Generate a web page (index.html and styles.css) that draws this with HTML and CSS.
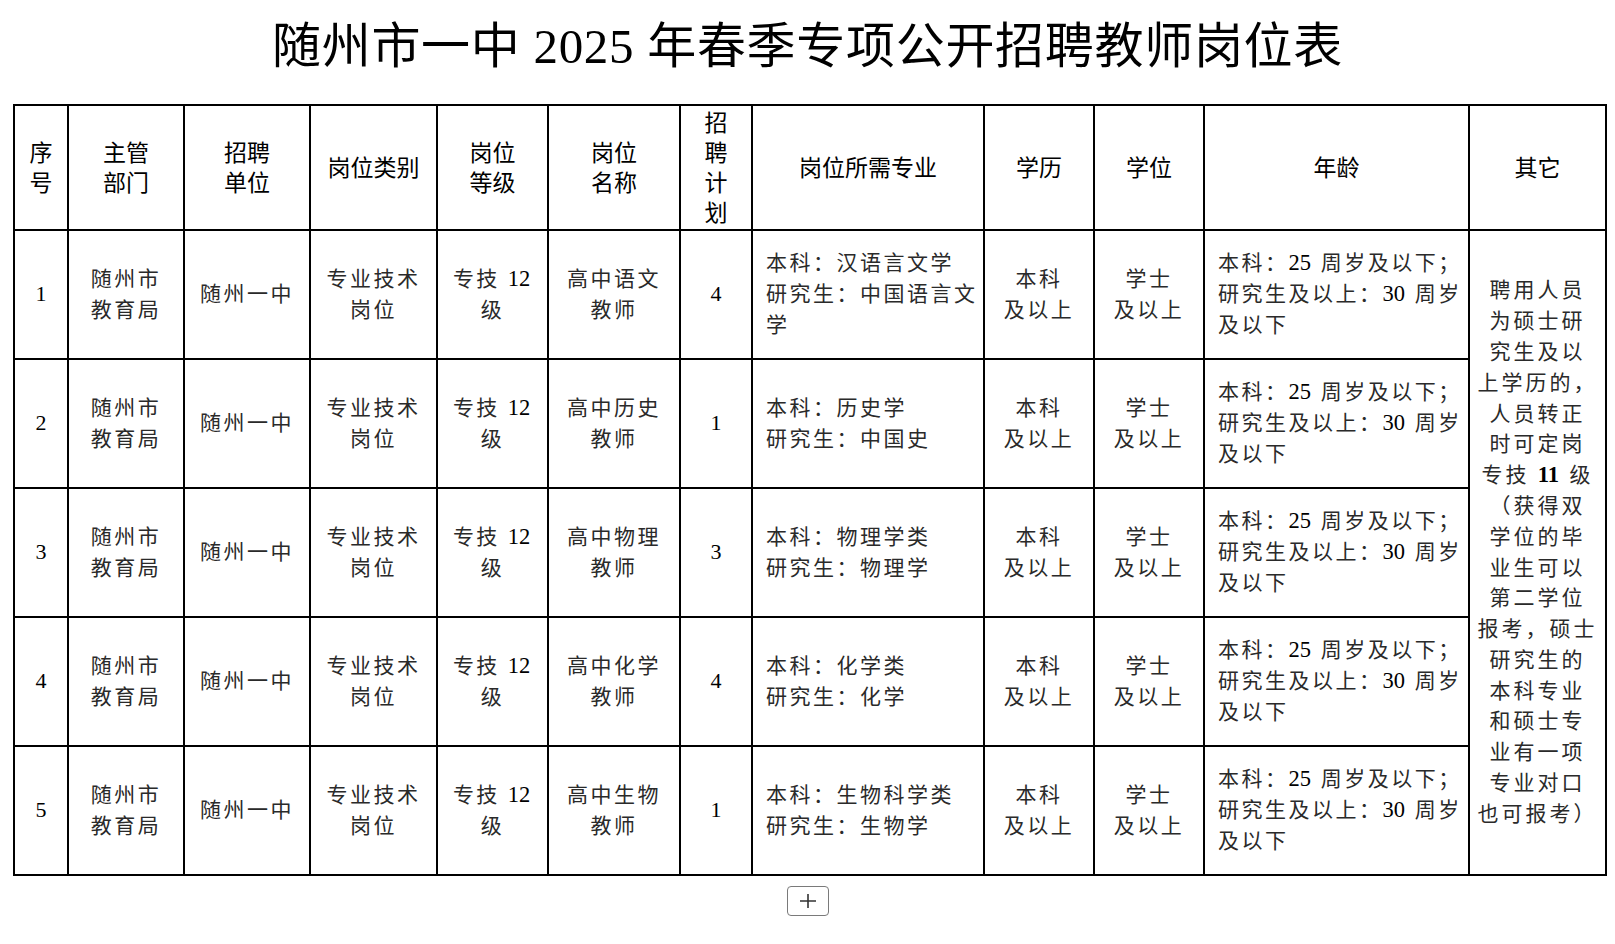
FILE: index.html
```html
<!DOCTYPE html>
<html lang="zh-CN">
<head>
<meta charset="utf-8">
<title>随州市一中2025年春季专项公开招聘教师岗位表</title>
<link rel="stylesheet" href="styles.css">
</head>
<body>
<div class="page">
  <h1 class="title">随州市一中 2025 年春季专项公开招聘教师岗位表</h1>
  <table class="jobs">
    <colgroup>
      <col class="w1"><col class="w2"><col class="w3"><col class="w4"><col class="w5"><col class="w6">
      <col class="w7"><col class="w8"><col class="w9"><col class="w10"><col class="w11"><col class="w12">
    </colgroup>
    <thead>
      <tr class="head">
        <th>序<br>号</th>
        <th>主管<br>部门</th>
        <th>招聘<br>单位</th>
        <th>岗位类别</th>
        <th>岗位<br>等级</th>
        <th>岗位<br>名称</th>
        <th>招<br>聘<br>计<br>划</th>
        <th>岗位所需专业</th>
        <th>学历</th>
        <th>学位</th>
        <th>年龄</th>
        <th>其它</th>
      </tr>
    </thead>
    <tbody>
      <tr>
        <td class="num">1</td>
        <td>随州市<br>教育局</td>
        <td>随州一中</td>
        <td>专业技术<br>岗位</td>
        <td>专技 <span class="d">12</span><br>级</td>
        <td>高中语文<br>教师</td>
        <td class="num">4</td>
        <td class="left">本科：汉语言文学<br>研究生：中国语言文<br>学</td>
        <td>本科<br>及以上</td>
        <td>学士<br>及以上</td>
        <td class="left">本科：<span class="d">25</span> 周岁及以下；<br>研究生及以上：<span class="d">30</span> 周岁<br>及以下</td>
        <td rowspan="5" class="other">聘用人员<br>为硕士研<br>究生及以<br>上学历的，<br>人员转正<br>时可定岗<br>专技 <span class="d b">11</span> 级<br>（获得双<br>学位的毕<br>业生可以<br>第二学位<br>报考，硕士<br>研究生的<br>本科专业<br>和硕士专<br>业有一项<br>专业对口<br>也可报考）</td>
      </tr>
      <tr>
        <td class="num">2</td>
        <td>随州市<br>教育局</td>
        <td>随州一中</td>
        <td>专业技术<br>岗位</td>
        <td>专技 <span class="d">12</span><br>级</td>
        <td>高中历史<br>教师</td>
        <td class="num">1</td>
        <td class="left">本科：历史学<br>研究生：中国史</td>
        <td>本科<br>及以上</td>
        <td>学士<br>及以上</td>
        <td class="left">本科：<span class="d">25</span> 周岁及以下；<br>研究生及以上：<span class="d">30</span> 周岁<br>及以下</td>
      </tr>
      <tr>
        <td class="num">3</td>
        <td>随州市<br>教育局</td>
        <td>随州一中</td>
        <td>专业技术<br>岗位</td>
        <td>专技 <span class="d">12</span><br>级</td>
        <td>高中物理<br>教师</td>
        <td class="num">3</td>
        <td class="left">本科：物理学类<br>研究生：物理学</td>
        <td>本科<br>及以上</td>
        <td>学士<br>及以上</td>
        <td class="left">本科：<span class="d">25</span> 周岁及以下；<br>研究生及以上：<span class="d">30</span> 周岁<br>及以下</td>
      </tr>
      <tr>
        <td class="num">4</td>
        <td>随州市<br>教育局</td>
        <td>随州一中</td>
        <td>专业技术<br>岗位</td>
        <td>专技 <span class="d">12</span><br>级</td>
        <td>高中化学<br>教师</td>
        <td class="num">4</td>
        <td class="left">本科：化学类<br>研究生：化学</td>
        <td>本科<br>及以上</td>
        <td>学士<br>及以上</td>
        <td class="left">本科：<span class="d">25</span> 周岁及以下；<br>研究生及以上：<span class="d">30</span> 周岁<br>及以下</td>
      </tr>
      <tr>
        <td class="num">5</td>
        <td>随州市<br>教育局</td>
        <td>随州一中</td>
        <td>专业技术<br>岗位</td>
        <td>专技 <span class="d">12</span><br>级</td>
        <td>高中生物<br>教师</td>
        <td class="num">1</td>
        <td class="left">本科：生物科学类<br>研究生：生物学</td>
        <td>本科<br>及以上</td>
        <td>学士<br>及以上</td>
        <td class="left">本科：<span class="d">25</span> 周岁及以下；<br>研究生及以上：<span class="d">30</span> 周岁<br>及以下</td>
      </tr>
    </tbody>
  </table>
  <div class="actions">
    <button class="add" type="button" aria-label="添加">
      <svg width="18" height="16" viewBox="0 0 18 16"><path d="M9 1V15M1 8H17" stroke="#333" stroke-width="1.6" fill="none"/></svg>
    </button>
  </div>
</div>
</body>
</html>
```

FILE: styles.css
```css
html, body {
  margin: 0;
  padding: 0;
  background: #fff;
}

.page {
  padding: 17px 0 0 13px;
}

.title {
  margin: 0 13px 27px 0;
  font-family: "Liberation Serif", "Noto Sans CJK SC", serif;
  font-size: 49px;
  font-weight: 400;
  line-height: 60px;
  text-align: center;
  color: #000;
  letter-spacing: 0.7px;
}

.jobs {
  border-collapse: collapse;
  table-layout: fixed;
  width: 1592px;
}

.w1 { width: 54px; }
.w2 { width: 116px; }
.w3 { width: 126px; }
.w4 { width: 127px; }
.w5 { width: 111px; }
.w6 { width: 132px; }
.w7 { width: 72px; }
.w8 { width: 232px; }
.w9 { width: 110px; }
.w10 { width: 110px; }
.w11 { width: 265px; }
.w12 { width: 137px; }

.jobs th,
.jobs td {
  border: 2px solid #000;
  padding: 0;
  text-align: center;
  vertical-align: middle;
  white-space: nowrap;
}

.head {
  height: 125px;
}

.jobs th {
  font-family: "Liberation Sans", "Noto Sans CJK SC", sans-serif;
  font-size: 23px;
  font-weight: 400;
  line-height: 30px;
  color: #000;
}

.jobs tbody tr {
  height: 129px;
}

.jobs td {
  font-family: "Liberation Serif", "Noto Sans CJK SC", serif;
  font-size: 21px;
  line-height: 30.8px;
  letter-spacing: 2.5px;
  color: #2a2a2a;
}

.jobs td .d {
  font-size: 22.5px;
  letter-spacing: 0;
  margin-right: 2px;
  color: #000;
}

.jobs td .d.b {
  font-weight: 700;
}

.jobs td.num {
  font-size: 22px;
  letter-spacing: 0;
  color: #000;
}

.jobs td.left {
  text-align: left;
  padding-left: 13px;
}

.jobs td.other {
  letter-spacing: 3px;
}

.actions {
  display: flex;
  justify-content: center;
  padding: 10px 13px 0 0;
}

.add {
  width: 42px;
  height: 30px;
  padding: 0;
  border: 1.5px solid #7a7a7a;
  border-radius: 4px;
  background: #fff;
  display: flex;
  align-items: center;
  justify-content: center;
}
```
